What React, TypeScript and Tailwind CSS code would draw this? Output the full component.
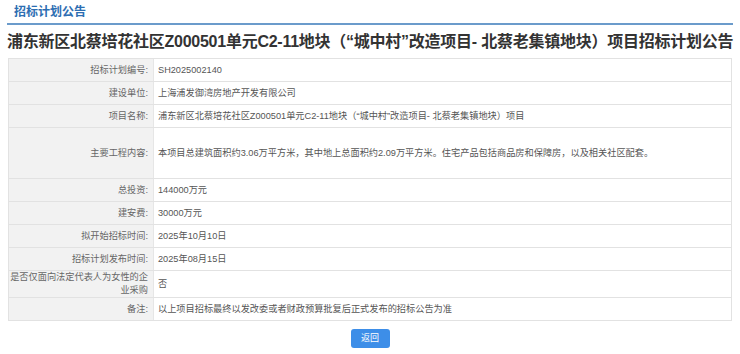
import React from "react";

const rows: { label: string; value: string; h: string }[] = [
  { label: "招标计划编号:", value: "SH2025002140", h: "h-[23px]" },
  { label: "建设单位:", value: "上海浦发御湾房地产开发有限公司", h: "h-[23px]" },
  {
    label: "项目名称:",
    value: "浦东新区北蔡培花社区Z000501单元C2-11地块（\u201c城中村\u201d改造项目- 北蔡老集镇地块）项目",
    h: "h-[23px]",
  },
  {
    label: "主要工程内容:",
    value: "本项目总建筑面积约3.06万平方米，其中地上总面积约2.09万平方米。住宅产品包括商品房和保障房，以及相关社区配套。",
    h: "h-[51px]",
  },
  { label: "总投资:", value: "144000万元", h: "h-[23px]" },
  { label: "建安费:", value: "30000万元", h: "h-[23px]" },
  { label: "拟开始招标时间:", value: "2025年10月10日", h: "h-[23px]" },
  { label: "招标计划发布时间:", value: "2025年08月15日", h: "h-[23px]" },
  { label: "是否仅面向法定代表人为女性的企业采购", value: "否", h: "h-[27px]" },
  { label: "备注:", value: "以上项目招标最终以发改委或者财政预算批复后正式发布的招标公告为准", h: "h-[23px]" },
];

export default function App() {
  return (
    <div
      className="w-[740px] h-[354px] bg-white px-[7px]"
      style={{ fontFamily: '"Liberation Sans", "Noto Sans CJK SC", sans-serif' }}
    >
      {/* section header */}
      <div className="h-[25px] border-b-2 border-[#6b9bcb] pl-[7px] flex items-center">
        <span className="text-[12px] font-bold text-[#2d6eb2] leading-none">招标计划公告</span>
      </div>

      {/* title */}
      <div className="h-[33px] flex items-center">
        <h1 className="text-[16px] font-bold text-[#333] leading-none whitespace-nowrap tracking-[-0.25px]">
          浦东新区北蔡培花社区Z000501单元C2-11地块（“城中村”改造项目- 北蔡老集镇地块）项目招标计划公告
        </h1>
      </div>

      {/* detail table */}
      <div className="mx-[1px] border border-[#e2e2e2] border-b-0">
        {rows.map((r, i) => (
          <div key={i} className={`flex border-b border-[#e2e2e2] ${r.h}`}>
            <div className="w-[145px] shrink-0 bg-[#f2f2f2] border-r border-[#e6e6e6] flex items-center justify-end pr-[5px] text-right text-[9.2px] leading-[13px] text-[#666]">
              {r.label}
            </div>
            <div className="flex-1 flex items-center pl-[4px] text-[9.2px] leading-[13px] text-[#555]">
              {r.value}
            </div>
          </div>
        ))}
      </div>

      {/* back button */}
      <div className="flex justify-center mt-[8px]">
        <button className="w-[39px] h-[19px] rounded-[3px] bg-[#3d8ee8] text-white text-[9px] leading-none">
          返回
        </button>
      </div>
    </div>
  );
}
